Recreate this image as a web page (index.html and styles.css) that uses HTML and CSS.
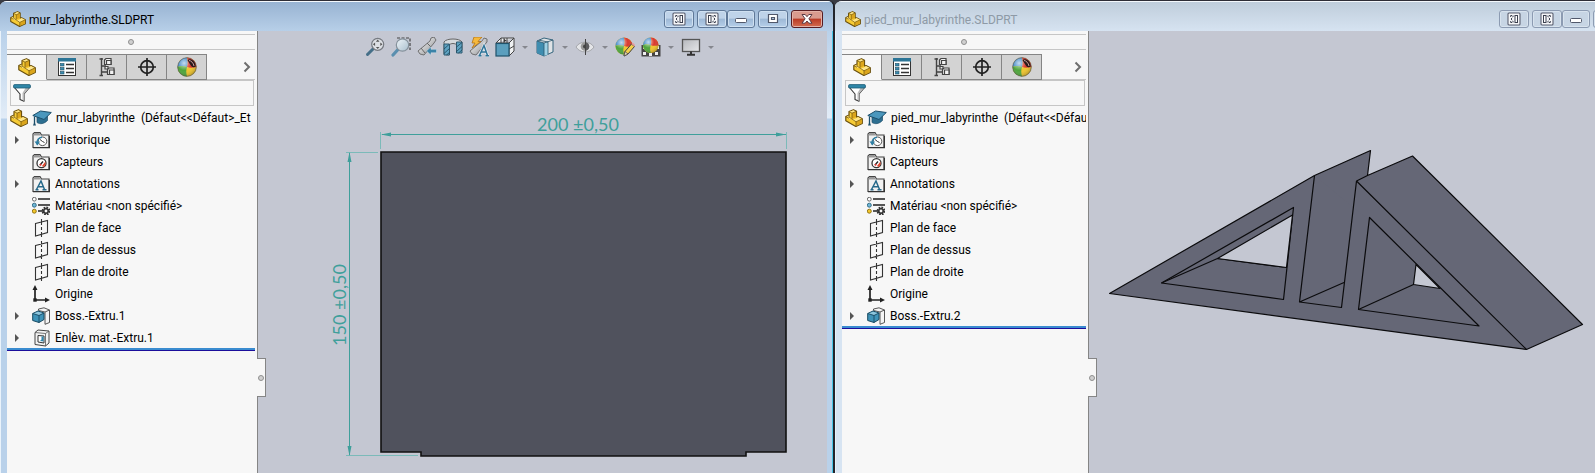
FILE: index.html
```html
<!DOCTYPE html>
<html lang="fr">
<head>
<meta charset="utf-8">
<title>mur_labyrinthe.SLDPRT</title>
<link rel="stylesheet" href="styles.css">
</head>
<body>
<svg class="sprite" aria-hidden="true">
  <defs>
    <linearGradient id="lens" x1="0" y1="0" x2="1" y2="1"><stop offset="0" stop-color="#eef4f8"/><stop offset="1" stop-color="#a9bfce"/></linearGradient>
    <linearGradient id="screen" x1="0" y1="0" x2="1" y2="1"><stop offset="0" stop-color="#b5b7bc"/><stop offset="1" stop-color="#e6e7ea"/></linearGradient>
    <linearGradient id="tube" x1="0" y1="0" x2="1" y2="1"><stop offset="0" stop-color="#ffffff"/><stop offset="1" stop-color="#8b8d90"/></linearGradient>
    <radialGradient id="shine" cx=".35" cy=".3" r=".75"><stop offset="0" stop-color="#fff" stop-opacity=".7"/><stop offset=".5" stop-color="#fff" stop-opacity="0"/><stop offset="1" stop-color="#000" stop-opacity=".25"/></radialGradient>
  </defs>
  <symbol id="part" viewBox="0 0 18 18">
    <path d="M4 2.500 8.500 .7 11.500 2.200V8L13 7.500 17.300 9.700V14.500L10.800 17.500 .8 11.800V7.500L4 6Z" fill="#f6cb35" stroke="#6b5110" stroke-width="1.200" stroke-linejoin="round"/>
    <path d="M4.500 2.700 8.500 1.200 11 2.400 7 4ZM1.500 7.700 4 6.500V8L7 9.500 5 10ZM10 10 13 8 16.800 9.900 11 12.700 6.500 10.300Z" fill="#ffe68a"/>
    <path d="M7 4.200 11 2.600V8L7 9.700ZM11 12.900 16.800 10.200V14.200L11 16.900Z" fill="#dba51c"/>
    <path d="M4.300 2.700 7 4.200 11.200 2.400M7 4.200V9.500M1 7.700 4 9.200M4 6V8L11 12.800 17 9.900M11 12.800V17" fill="none" stroke="#7b5d10" stroke-width=".8"/>
  </symbol>
  <symbol id="cap" viewBox="0 0 20 18">
    <path d="M5 8V13.500C8 15.500 12 15 15.500 11.500V7Z" fill="#2d6f91" stroke="#1d4f6b" stroke-width=".7"/>
    <path d="M0.800 6.500 8.500 2 19.300 3.500 12 10.500Z" fill="#4b97bd" stroke="#1d4f6b"/>
    <path d="M2.500 7.500V14.500" stroke="#1d4f6b" stroke-width="1.300"/>
    <path d="M2.500 12.500 1 16.500H4Z" fill="#1d4f6b"/>
  </symbol>
  <symbol id="props" viewBox="0 0 20 20">
    <rect x="1.500" y="1.500" width="17" height="17" fill="#fff" stroke="#333"/>
    <rect x="1" y="1" width="18" height="3.500" fill="#2c7596"/>
    <g fill="#3b8cb0" stroke="#1f4f66" stroke-width=".6"><rect x="3.500" y="6.500" width="3.500" height="2.500"/><rect x="3.500" y="10.500" width="3.500" height="2.500"/><rect x="3.500" y="14.500" width="3.500" height="2.500"/></g>
    <path d="M9 7.500H17M9 11.500H17M9 15.500H17" stroke="#333" stroke-width="1.400"/>
  </symbol>
  <symbol id="config" viewBox="0 0 20 20">
    <path d="M4.500 1V19M2.500 2H6M2.500 18.500H6M4.500 9H9M4.500 15H11" stroke="#444" stroke-width="1.400" fill="none"/>
    <g fill="#f2f2f2" stroke="#444" stroke-width="1.200"><path d="M7.500 3 9 1.500H14V7.500H7.500Z"/><path d="M9.500 3.500H14V7.500H9.500Z"/><path d="M8 9.500H11V12H8Z"/><path d="M10.500 12.500 12 11H17V17.500H10.500Z"/><path d="M12.500 13H17V17.500H12.500Z"/></g>
  </symbol>
  <symbol id="target" viewBox="0 0 20 20">
    <circle cx="10" cy="10" r="6.300" fill="none" stroke="#222" stroke-width="1.700"/><path d="M10 1V19M1 10H19" stroke="#222" stroke-width="1.700"/>
  </symbol>
  <symbol id="ball" viewBox="0 0 20 20">
    <circle cx="10" cy="10" r="9.500" fill="#f0c52d"/>
    <path d="M10 .5A9.500 9.500 0 0 0 .5 10C4 8.500 7 8.500 10 10 11 7 11 4 10 .5Z" fill="#3d86c6"/>
    <path d="M10 .5A9.500 9.500 0 0 1 19.500 10C16 11 13 11 10 10 11 7 11 4 10 .5Z" fill="#d93a2f"/>
    <path d="M.5 10A9.500 9.500 0 0 0 10 19.500C9 16 9 13 10 10 7 8.500 4 8.500 .5 10Z" fill="#4fa53c"/>
    <circle cx="10" cy="10" r="9.500" fill="url(#shine)"/>
  </symbol>
  <symbol id="display-tab" viewBox="0 0 20 20">
    <use href="#ball"/><circle cx="10" cy="10" r="9.300" fill="none" stroke="#555" stroke-width=".6"/>
    <path d="M10.500 3C13 1 18.500 3.500 18.700 9.500 15 12 13.500 8 10.500 3Z" fill="#2b1c1c"/><path d="M12 3.500C14 3.500 16.500 6 17 9" stroke="#c99" fill="none"/>
  </symbol>
  <symbol id="funnel" viewBox="0 0 18 18">
    <path d="M1 3 7 10V15.500L11 17.300V10L17 3Z" fill="#fff" stroke="#333" stroke-width="1.100" stroke-linejoin="round"/>
    <path d="M12.500 4 9.500 9V16L11 17V10L16 4Z" fill="#bbb"/>
    <rect x=".6" y=".6" width="16.800" height="3.400" rx="1" fill="#2f86a8" stroke="#1d5a75" stroke-width=".8"/>
  </symbol>
  <symbol id="folder" viewBox="0 0 18 18">
    <path d="M1 16.500V3L2.500 1.500H8L9.500 4H17V16.500Z" fill="#f1f1f1" stroke="#444" stroke-width="1.200"/>
    <path d="M1.500 3 3 2H7.500L9 4.500H1.500Z" fill="#999"/><path d="M1 16.600H17.500V5" fill="none" stroke="#333" stroke-width="1.400"/>
  </symbol>
  <symbol id="history" viewBox="0 0 18 18">
    <use href="#folder"/><circle cx="10.500" cy="10.300" r="4.300" fill="#fff" stroke="#555"/><path d="M8 8.500 10.500 10.500 12.500 11.500" fill="none" stroke="#333"/>
    <path d="M5 13.500C4.500 9 7 6.500 10 6.300" fill="none" stroke="#2f7fa3" stroke-width="1.600"/><path d="M2.500 10.500H8L5.500 14.500Z" fill="#2f7fa3"/>
  </symbol>
  <symbol id="sensor" viewBox="0 0 18 18">
    <use href="#folder"/><circle cx="9.500" cy="10.200" r="4.500" fill="#fff" stroke="#333" stroke-width="1.300"/>
    <path d="M10 13 13.500 8.500V11.500L12 14Z" fill="#e2462c"/><path d="M8 12 11 8.500" stroke="#222" stroke-width="1.300"/><circle cx="8.500" cy="11.700" r="1" fill="#d33"/>
  </symbol>
  <symbol id="note" viewBox="0 0 18 18">
    <use href="#folder"/><path d="M4.500 14.500 9 6 12.500 14.500M6.500 11.700H11.500M3.500 14.700H6.500M10.500 14.700H14.500" fill="none" stroke="#26698a" stroke-width="1.500"/>
  </symbol>
  <symbol id="material" viewBox="0 0 18 18">
    <path d="M6 2H18M6 8H18M6 14H12" stroke="#222" stroke-width="1.600"/>
    <circle cx="2.300" cy="2.200" r="1.900" fill="#fff" stroke="#555" stroke-width=".9"/><circle cx="2.300" cy="8.200" r="2" fill="#6fb7d6" stroke="#2c6580" stroke-width=".9"/><circle cx="2.300" cy="14.200" r="2" fill="#f3c72c" stroke="#8a6c0d" stroke-width=".9"/>
    <circle cx="14" cy="14" r="3.200" fill="none" stroke="#333" stroke-width="2.400" stroke-dasharray="1.600 .9"/><circle cx="14" cy="14" r="2.200" fill="none" stroke="#333" stroke-width="1.500"/>
  </symbol>
  <symbol id="plane" viewBox="0 0 18 18">
    <path d="M3.500 4.500 15.500 1.500V13.500L3.500 17ZM9.500 0V6M9.500 8V11M9.500 13V18" fill="none" stroke="#333" stroke-width="1.100"/>
  </symbol>
  <symbol id="origin" viewBox="0 0 18 18">
    <path d="M3 4V15H14" fill="none" stroke="#222" stroke-width="1.700"/><path d="M.5 5 3 0 5.500 5ZM13 12.500 18 15 13 17.500Z" fill="#222"/><rect x="1.300" y="13.300" width="3.400" height="3.400" fill="#222"/>
  </symbol>
  <symbol id="boss" viewBox="0 0 18 18">
    <path d="M6.500 2 12 .8 17.500 3V15.500L13 17.300V5L6.500 3.500Z" fill="#f4f4f4" stroke="#444" stroke-width=".9"/><path d="M13 5 17.500 3" stroke="#444" stroke-width=".9"/>
    <path d="M.7 6.500 6 4 12 6V12.500L7 15.500.7 13.500Z" fill="#3f93b8" stroke="#184a62"/><path d="M1.200 6.700 6 4.700 11.300 6.300 7 8.300Z" fill="#8ec6de"/><path d="M.7 6.500 7 8.500 12 6M7 8.500V15.500" fill="none" stroke="#184a62" stroke-width=".9"/>
  </symbol>
  <symbol id="cut" viewBox="0 0 18 18">
    <path d="M3 3.500 6 1 17 2V14L13.500 17 3 15.500Z" fill="#f2f2f2" stroke="#444"/><path d="M3 3.500 13.500 4.500V17M13.500 4.500 17 2" fill="none" stroke="#555" stroke-width=".8"/>
    <path d="M6 6.500 12 7V14L6 13Z" fill="#fff" stroke="#333"/><path d="M8 12 11.500 12.500V7.500H9.500V10.500Z" fill="#2f86ad"/>
  </symbol>
  <symbol id="zoomfit" viewBox="0 0 20 20">
    <path d="M2.500 17.500 8 12" stroke="#456f88" stroke-width="3" stroke-linecap="round"/><circle cx="12.700" cy="7.300" r="6" fill="#dcdfe4" stroke="#777b82" stroke-width="1.200"/>
    <path d="M12.700 2.500 14.500 4.700H10.900ZM12.700 12.100 14.500 9.900H10.900ZM7.900 7.300 10.100 5.500V9.100ZM17.500 7.300 15.300 5.500V9.100Z" fill="#555"/>
  </symbol>
  <symbol id="zoomarea" viewBox="0 0 20 20">
    <path d="M6 1H19V13" fill="none" stroke="#444" stroke-width="1.200" stroke-dasharray="3 1.500"/><path d="M2 18 7 12.500" stroke="#5a8faf" stroke-width="3.200" stroke-linecap="round"/>
    <circle cx="11.500" cy="8" r="6.200" fill="url(#lens)" stroke="#85919b" stroke-width="1.200"/>
  </symbol>
  <symbol id="prev" viewBox="0 0 20 20">
    <path d="M1 14 13 4 14 1 17 0 19 3 17 6 7 18 3 17Z" fill="url(#tube)" stroke="#666" stroke-width=".9"/><path d="M10 6 14 10M4 11 8 16" stroke="#666"/>
    <path d="M9.500 14 14 9.800V12.300H19.500V15.800H14V18.200Z" fill="#3a83a8" stroke="#d9e3ea" stroke-width=".5"/>
  </symbol>
  <symbol id="section" viewBox="0 0 20 20">
    <path d="M1 5C3 1 17 1 19 5V13H14V8C12 6 8 6 6 8V18L1 17Z" fill="#d7dadd" stroke="#666"/>
    <path d="M1 7H6.500V18H1ZM13.500 5H19V16H13.500Z" fill="#5fa3c2" stroke="#2f5a70"/><path d="M1 12 6 7.500M1 16.500 6.500 11.500M3.500 18 6.500 15.500M13.500 10 19 5.500M13.500 14.500 19 9.500M15.500 16 19 13" stroke="#1d465c" stroke-width=".8"/>
  </symbol>
  <symbol id="dynview" viewBox="0 0 20 20">
    <path d="M1 14 13 4 15 1 18 2 18 5 7 18 3 17Z" fill="url(#tube)" stroke="#666" stroke-width=".9"/>
    <path d="M5 0H13L9 4.500H12L3 11 6 6H3Z" fill="#f6b93b" stroke="#b27217" stroke-width=".8"/>
    <path d="M10.500 18.500 15 8.500 18.500 18.500M12 15H17.500M9.500 18.700H12.500M16.500 18.700H20" fill="none" stroke="#e1e8ee" stroke-width="3"/><path d="M10.500 18.500 15 8.500 18.500 18.500M12 15H17.500M9.500 18.700H12.500M16.500 18.700H20" fill="none" stroke="#2f7498" stroke-width="1.500"/>
  </symbol>
  <symbol id="orient" viewBox="0 0 20 20">
    <path d="M1 6 6 1H19V14L14 19M6 1V6M1 6H14L19 1M14 6V19M12 1V6M14 12 19 9M9 6V1" fill="#eef0f2" stroke="#444"/><path d="M9 2V5L11.500 3.500Z" fill="#333"/>
    <rect x="1" y="6.500" width="13" height="12.500" fill="#5b9fbe" stroke="#1f526b" stroke-width="1.200"/>
  </symbol>
  <symbol id="style" viewBox="0 0 20 20">
    <path d="M2 4 9 1 18 3V15L9 19 2 16Z" fill="#dfe3e6" stroke="#35657d"/><path d="M2 4 9 6V19L2 16Z" fill="#3f8db0"/><path d="M9 6 13 4.800V17.500L9 19Z" fill="#9ed1e5"/><path d="M2 4 9 6 18 3M9 6V19M13 5V17.500M4 3.200 13 5" fill="none" stroke="#2a566c" stroke-width=".8"/>
  </symbol>
  <symbol id="eye" viewBox="0 0 20 20">
    <path d="M1 10C5 3.500 15 3.500 19 10 15 16.500 5 16.500 1 10Z" fill="#e4e5e8" stroke="#a5a7ac"/><circle cx="10" cy="9.500" r="4.300" fill="#999"/><circle cx="10" cy="9.500" r="2" fill="#444"/><path d="M10 5.200A4.300 4.300 0 0 1 10 13.800Z" fill="#5b5b5e"/><path d="M10.500 2V18" stroke="#444"/>
  </symbol>
  <symbol id="appearance" viewBox="0 0 20 20">
    <use href="#ball" width="18" height="18"/><path d="M9 19 10 14.500 16.500 7 19.500 9.500 13 17Z" fill="#f3cf4c" stroke="#444"/><path d="M16.500 7 17.800 5.500 20 8 19.500 9.500Z" fill="#e89b9b"/><path d="M9 19 10 14.500 13 17Z" fill="#ead9b5" stroke="#444" stroke-width=".7"/>
  </symbol>
  <symbol id="scene" viewBox="0 0 20 20">
    <path d="M.5 8H19.500V19.500H.5Z" fill="#444"/><path d="M2 9H4V12H2ZM16 9H18V12H16ZM2 15H5V18H2ZM8 16H11V19H8ZM14 15H17V18H14Z" fill="#eee"/><use href="#ball" x="1.500" width="16.500" height="16.500"/>
  </symbol>
  <symbol id="monitor" viewBox="0 0 20 20">
    <rect x="1.500" y="2.500" width="17" height="12" fill="url(#screen)" stroke="#555" stroke-width="1.300"/><path d="M10 14.500V17.500M6 17.700H14" stroke="#333" stroke-width="2"/>
  </symbol>
  <symbol id="pane-left" viewBox="0 0 14 14">
    <rect x="1" y="1" width="12" height="12" rx="1" fill="#f5f6f8" stroke="#5a5e6e" stroke-width="1.100"/><path d="M6 3.500V5M6 9V10.500M5 3.500H3.700V5M5 10.500H3.700V9M5.300 5.800 4 7 5.300 8.200" fill="none" stroke="#3b3f4e"/><rect x="8" y="3.500" width="2.500" height="7" fill="#fff" stroke="#3b3f4e"/>
  </symbol>
  <symbol id="pane-right" viewBox="0 0 14 14">
    <rect x="1" y="1" width="12" height="12" rx="1" fill="#f5f6f8" stroke="#5a5e6e" stroke-width="1.100"/><path d="M8 3.500V5M8 9V10.500M9 3.500H10.300V5M9 10.500H10.300V9M8.700 5.800 10 7 8.700 8.200" fill="none" stroke="#3b3f4e"/><rect x="3.500" y="3.500" width="2.500" height="7" fill="#fff" stroke="#3b3f4e"/>
  </symbol>
  <symbol id="min" viewBox="0 0 14 14"><rect x="1.500" y="6.500" width="11" height="4" rx="1" fill="#fff" stroke="#51586b"/></symbol>
  <symbol id="max" viewBox="0 0 14 14"><path d="M2.500 2.500H11.500V10.500H2.500ZM5.500 5.500V7.500H8.500V5.500Z" fill="#fff" fill-rule="evenodd" stroke="#51586b" stroke-width="1.200"/></symbol>
  <symbol id="close" viewBox="0 0 14 14"><path d="M2 2.500H5.200L7 4.700 8.800 2.500H12L8.900 6.800 12 11.200H8.800L7 9 5.200 11.200H2L5.100 6.800Z" fill="#fff" stroke="#5b3a44"/></symbol>
</svg>

<main class="desktop">
  <section class="window active">
    <header class="titlebar">
      <svg class="app-icon"><use href="#part"/></svg>
      <h1 class="title">mur_labyrinthe.SLDPRT</h1>
      <div class="controls">
        <button class="pane" aria-label="Volet gauche"><svg><use href="#pane-left"/></svg></button>
        <button class="pane" aria-label="Volet droit"><svg><use href="#pane-right"/></svg></button>
        <button class="minimize" aria-label="Réduire"><svg><use href="#min"/></svg></button>
        <button aria-label="Agrandir"><svg><use href="#max"/></svg></button>
        <button class="close" aria-label="Fermer"><svg><use href="#close"/></svg></button>
      </div>
    </header>
    <div class="content">
      <aside class="panel">
        <div class="grip"><span class="dot"></span></div>
        <nav class="tabs">
          <button class="tab selected" aria-label="Arbre de création"><svg><use href="#part"/></svg></button>
          <button class="tab" aria-label="Propriétés"><svg><use href="#props"/></svg></button>
          <button class="tab" aria-label="Configurations"><svg><use href="#config"/></svg></button>
          <button class="tab" aria-label="Cotes"><svg><use href="#target"/></svg></button>
          <button class="tab" aria-label="Affichage"><svg><use href="#display-tab"/></svg></button>
          <button class="more" aria-label="Suite"><svg viewBox="0 0 8 12"><path d="M1.500 1.500 6 6 1.500 10.500" fill="none" stroke="#6e6e6e" stroke-width="2"/></svg></button>
        </nav>
        <label class="filter"><svg><use href="#funnel"/></svg><input type="text" aria-label="Filtre"></label>
        <div class="root"><svg class="node"><use href="#part"/></svg><svg class="cap"><use href="#cap"/></svg><span>mur_labyrinthe&nbsp; (Défaut&lt;&lt;Défaut&gt;_Et</span></div>
        <ul class="tree">
          <li><button class="expand" aria-label="Développer Historique"></button><svg class="node"><use href="#history"/></svg>Historique</li>
          <li><svg class="node"><use href="#sensor"/></svg>Capteurs</li>
          <li><button class="expand" aria-label="Développer Annotations"></button><svg class="node"><use href="#note"/></svg>Annotations</li>
          <li><svg class="node"><use href="#material"/></svg>Matériau &lt;non spécifié&gt;</li>
          <li><svg class="node"><use href="#plane"/></svg>Plan de face</li>
          <li><svg class="node"><use href="#plane"/></svg>Plan de dessus</li>
          <li><svg class="node"><use href="#plane"/></svg>Plan de droite</li>
          <li><svg class="node"><use href="#origin"/></svg>Origine</li>
          <li><button class="expand" aria-label="Développer Boss.-Extru.1"></button><svg class="node"><use href="#boss"/></svg>Boss.-Extru.1</li>
          <li><button class="expand" aria-label="Développer Enlèv. mat.-Extru.1"></button><svg class="node"><use href="#cut"/></svg>Enlèv. mat.-Extru.1</li>
        </ul>
        <button class="handle" aria-label="Masquer le volet"><span class="dot"></span></button>
      </aside>
      <div class="viewport">
        <div class="toolbar">
          <button aria-label="Zoom au mieux"><svg><use href="#zoomfit"/></svg></button>
          <button aria-label="Zoom fenêtre"><svg><use href="#zoomarea"/></svg></button>
          <button aria-label="Vue précédente"><svg><use href="#prev"/></svg></button>
          <button aria-label="Vue en coupe"><svg><use href="#section"/></svg></button>
          <button aria-label="Annotations dynamiques"><svg><use href="#dynview"/></svg></button>
          <button aria-label="Orientation"><svg><use href="#orient"/></svg></button>
          <button class="caret" aria-label="Options d'orientation"></button>
          <button aria-label="Style d'affichage"><svg><use href="#style"/></svg></button>
          <button class="caret" aria-label="Options de style"></button>
          <button aria-label="Cacher ou montrer"><svg><use href="#eye"/></svg></button>
          <button class="caret" aria-label="Options de visibilité"></button>
          <button aria-label="Apparence"><svg><use href="#appearance"/></svg></button>
          <button aria-label="Scène"><svg><use href="#scene"/></svg></button>
          <button class="caret" aria-label="Options de scène"></button>
          <button aria-label="Vue"><svg><use href="#monitor"/></svg></button>
          <button class="caret" aria-label="Options de vue"></button>
        </div>
        <svg class="model" viewBox="258 31 569 442" preserveAspectRatio="xMinYMin meet">
          <path d="M381 152H786V452H746V456H421V452H381Z" fill="#50525d" stroke="#111" stroke-width="1.600"/>
          <g class="dimension">
            <path d="M380.500 132V149M786.500 132V149M346 152.500H378M346 455.500H418" stroke="#7bbab9"/>
            <path d="M382 134.500H786M349.500 153V455" stroke="#3f9f9b"/>
            <path d="M381 134.500 391 132.500V136.500ZM786 134.500 776 132.500V136.500ZM349.500 152 347.500 162H351.500ZM349.500 456 347.500 446H351.500Z" fill="#3f9f9b"/>
            <text x="578" y="131" text-anchor="middle">200 ±0,50</text>
            <text transform="translate(346 305) rotate(-90)" text-anchor="middle">150 ±0,50</text>
          </g>
        </svg>
      </div>
    </div>
  </section>

  <section class="window inactive">
    <header class="titlebar">
      <svg class="app-icon"><use href="#part"/></svg>
      <h2 class="title">pied_mur_labyrinthe.SLDPRT</h2>
      <div class="controls">
        <button class="pane" aria-label="Volet gauche"><svg><use href="#pane-left"/></svg></button>
        <button class="pane" aria-label="Volet droit"><svg><use href="#pane-right"/></svg></button>
        <button class="minimize" aria-label="Réduire"><svg><use href="#min"/></svg></button>
        <button aria-label="Agrandir"><svg><use href="#max"/></svg></button>
        <button class="close" aria-label="Fermer"><svg><use href="#close"/></svg></button>
      </div>
    </header>
    <div class="content">
      <aside class="panel">
        <div class="grip"><span class="dot"></span></div>
        <nav class="tabs">
          <button class="tab selected" aria-label="Arbre de création"><svg><use href="#part"/></svg></button>
          <button class="tab" aria-label="Propriétés"><svg><use href="#props"/></svg></button>
          <button class="tab" aria-label="Configurations"><svg><use href="#config"/></svg></button>
          <button class="tab" aria-label="Cotes"><svg><use href="#target"/></svg></button>
          <button class="tab" aria-label="Affichage"><svg><use href="#display-tab"/></svg></button>
          <button class="more" aria-label="Suite"><svg viewBox="0 0 8 12"><path d="M1.500 1.500 6 6 1.500 10.500" fill="none" stroke="#6e6e6e" stroke-width="2"/></svg></button>
        </nav>
        <label class="filter"><svg><use href="#funnel"/></svg><input type="text" aria-label="Filtre"></label>
        <div class="root"><svg class="node"><use href="#part"/></svg><svg class="cap"><use href="#cap"/></svg><span>pied_mur_labyrinthe&nbsp; (Défaut&lt;&lt;Défau</span></div>
        <ul class="tree">
          <li><button class="expand" aria-label="Développer Historique"></button><svg class="node"><use href="#history"/></svg>Historique</li>
          <li><svg class="node"><use href="#sensor"/></svg>Capteurs</li>
          <li><button class="expand" aria-label="Développer Annotations"></button><svg class="node"><use href="#note"/></svg>Annotations</li>
          <li><svg class="node"><use href="#material"/></svg>Matériau &lt;non spécifié&gt;</li>
          <li><svg class="node"><use href="#plane"/></svg>Plan de face</li>
          <li><svg class="node"><use href="#plane"/></svg>Plan de dessus</li>
          <li><svg class="node"><use href="#plane"/></svg>Plan de droite</li>
          <li><svg class="node"><use href="#origin"/></svg>Origine</li>
          <li><button class="expand" aria-label="Développer Boss.-Extru.2"></button><svg class="node"><use href="#boss"/></svg>Boss.-Extru.2</li>
        </ul>
        <button class="handle" aria-label="Masquer le volet"><span class="dot"></span></button>
      </aside>
      <div class="viewport">
        <svg class="model" viewBox="1089 31 573 442" preserveAspectRatio="xMinYMin meet">
          <g stroke="#0b0b0d" stroke-width="1.200" stroke-linejoin="round" fill="#656776">
            <path d="M1109.500 293.500 1314.500 175.500 1370.500 150.500 1367.500 175.500 1412.500 156 1582.500 324.500 1526.500 349.500Z"/>
            <path d="M1356.500 181 1367.500 175.500M1314.500 175.500 1299.500 302 1341.500 307.500 1356.500 181 1526.500 349.500M1299.500 302 1344 282.500"/>
            <path d="M1161.500 283 1293.500 207.500 1283.500 299.500Z"/>
            <path d="M1161.500 283 1217.500 258.500 1287 267.500" fill="none"/>
            <path d="M1217.500 258.500 1292.500 215 1286.500 267.500Z" fill="#c4c7d2"/>
            <path d="M1369.500 217.500 1358.500 309.500 1479 326Z"/>
            <path d="M1358.500 309.500 1413.500 284.500" fill="none"/>
            <path d="M1416 264.500 1413.500 284.500 1440 288.500Z" fill="#c4c7d2"/>
          </g>
        </svg>
      </div>
    </div>
  </section>
</main>
</body>
</html>
```
FILE: styles.css
```css
* { box-sizing: border-box; }

body {
  margin: 0;
  overflow: hidden;
  background: #3a3c44;
  color: #000;
  font: 12px/22px Roboto, "Noto Sans", sans-serif;
}

button {
  padding: 0;
  border: 0;
  background: none;
  color: inherit;
  font: inherit;
  display: flex;
  align-items: center;
  justify-content: center;
}

svg { display: block; flex: none; }
.sprite { position: absolute; width: 0; height: 0; }

.desktop { display: flex; height: 100vh; }

/* Windows keep the same share of the desktop; the second runs off the right edge. */
.window {
  flex: 0 0 calc(100% * 835 / 1595);
  display: flex;
  flex-direction: column;
  min-width: 0;
  border-top: 1px solid #2e2d36;
  border-radius: 7px 7px 0 0;
  overflow: hidden;
}
.active {
  background: linear-gradient(#b9d1ea 30px, #e2ecf7 117px, #b9d1ea 118px);
  border-right: 2px solid #22242b;
  box-shadow: inset 1px 0 #eaf3fb, inset -1px 0 #47c4e6;
}
.inactive {
  background: #d7e4f2;
  border-right: 2px solid #22242b;
  box-shadow: inset 1px 0 #eaf1f8;
}

.titlebar {
  flex: none;
  display: flex;
  height: 30px;
  padding: 8px 10px 0;
  border-top: 1px solid #f4f8fc;
}
.active .titlebar { background: linear-gradient(#98b3d2, #b7cfe8); }
.inactive .titlebar { background: linear-gradient(#bfcddb, #d6e3f1); }
.app-icon { width: 16px; height: 18px; }
.title {
  flex: 1;
  margin: 0 0 0 3px;
  font-size: 12px;
  font-weight: 400;
  line-height: 20px;
  white-space: nowrap;
}
.inactive .title { color: #8e9aa6; }

.controls { display: flex; gap: 3px; height: 18px; }
.controls button {
  width: 30px;
  border: 1px solid #5f7898;
  border-radius: 3px;
  background: linear-gradient(#bfd3e9 45%, #9db8d6 50%, #b6cfe9);
  box-shadow: inset 0 0 0 1px #cfe0f1;
}
.controls .minimize { width: 28px; margin-left: -3px; }
.controls .close {
  width: 32px;
  border-color: #571c22;
  background: linear-gradient(#d99a8e 45%, #b93a25 50%, #d36d52);
  box-shadow: inset 0 0 0 1px #e3b1a7;
}
.controls svg { width: 14px; height: 14px; }
.inactive .controls button {
  border-color: #8c9bb2;
  background: #c7d5e4;
  box-shadow: inset 0 0 0 1px #d8e3ee;
}

.content { flex: 1; display: flex; min-height: 0; padding: 0 6px 0 7px; }

.panel {
  position: relative;
  flex: none;
  width: 251px;
  padding: 3px 2px 0 0;
  background: #f7f7f7;
  border-right: 1px solid #858585;
}
.inactive .panel { width: 247px; }

.grip {
  display: flex;
  align-items: center;
  justify-content: center;
  height: 16px;
  border: 1px solid #c6c6c6;
  border-width: 1px 0;
}
.dot { width: 6px; height: 6px; border: 1px solid #8f8f8f; border-radius: 50%; background: #d0d0d0; }

.tabs {
  display: flex;
  height: 26px;
  margin-top: 4px;
}
.tab {
  width: 40px;
  border: 1px solid #858585;
  border-left: 0;
  background: #d3d3d3;
}
.tab.selected { border-bottom-color: #f7f7f7; background: #f7f7f7; }
.tab svg { width: 20px; height: 20px; }
.tab.selected svg { width: 18px; height: 18px; }
.more { flex: 1; justify-content: flex-end; padding-right: 4px; border-bottom: 1px solid #c6c6c6; }
.more svg { width: 8px; height: 12px; }

.filter {
  display: flex;
  align-items: center;
  height: 26px;
  margin: 0 1px 1px 3px;
  padding-left: 2px;
  border: 1px solid #c6c6c6;
}
.filter svg { width: 18px; height: 18px; }
.filter input { flex: 1; min-width: 0; border: 0; outline: 0; background: none; font: inherit; }

.root {
  display: flex;
  align-items: center;
  gap: 4px;
  height: 22px;
  padding-left: 3px;
  overflow: hidden;
  white-space: nowrap;
}
.node { width: 18px; height: 18px; }
.cap { width: 20px; height: 18px; }

.tree {
  margin: 0;
  padding: 0;
  list-style: none;
  border-bottom: 1px solid #1c0f9c;
  box-shadow: inset 0 -2px #3a8cd0;
}
.tree li {
  display: flex;
  align-items: center;
  gap: 5px;
  height: 22px;
  padding-left: 25px;
  white-space: nowrap;
}
.tree li:last-child { margin-bottom: 1px; }
.expand { width: 17px; height: 20px; margin: 0 -5px 0 -17px; justify-content: flex-start; }
.expand::before { content: ""; border: 4px solid transparent; border-left: 4px solid #555; border-right: 0; }

.handle {
  position: absolute;
  z-index: 2;
  top: 327px;
  left: 100%;
  width: 9px;
  height: 39px;
  background: #f7f7f7;
  border: 1px solid #858585;
  border-left: 0;
}
.handle .dot { flex: none; }

.viewport { position: relative; flex: 1; min-width: 0; background: #c4c7d2; }
.model { width: 100%; height: 100%; }
.dimension text { fill: #3f9f9b; font: 18px Lato, "Open Sans", sans-serif; }

.toolbar {
  position: absolute;
  inset: 4px 6px auto 0;
  display: flex;
  justify-content: center;
}
.toolbar button { width: 26px; height: 24px; }
.toolbar svg { width: 20px; height: 20px; }
.toolbar .caret { width: 14px; }
.caret::before { content: ""; border: 3px solid transparent; border-top-color: #85878e; border-bottom: 0; }
```
